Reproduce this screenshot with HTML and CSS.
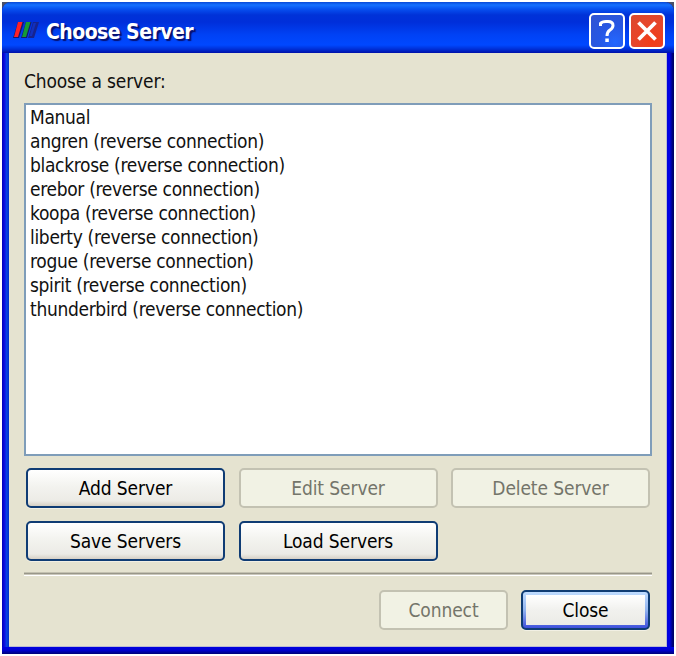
FILE: index.html
```
<!DOCTYPE html>
<html lang="en">
<head>
<meta charset="utf-8">
<title>Choose Server</title>
<link rel="stylesheet" href="styles.css">
</head>
<body>
<main class="window">
  <header class="titlebar">
    <svg class="logo" viewBox="0 0 26 18" width="26" height="18">
      <path d="M5 1H11L6 17H0Z" fill="#17176b"/>
      <path d="M5 1H9.5L5 16H1Z" fill="#ff2028"/>
      <path d="M13 1H18.5L14 17H8Z" fill="#17176b"/>
      <path d="M13 1H17.5L13 16H9Z" fill="#159b35"/>
      <path d="M20 1H26L21 17H15Z" fill="#17238e"/>
      <path d="M20.5 2H23L19 15H16.5Z" fill="#1230bd"/>
    </svg>
    <h1 class="title">Choose Server</h1>
    <button class="caption help" aria-label="Help">
      <svg viewBox="0 0 32 32" width="32" height="32"><path d="M9.5 11V8.5Q11 6.5 15 6.5H17Q22 6.5 22 10.5Q22 13 19 15Q16 17 16 21" fill="none" stroke="#fff" stroke-width="3"/><path d="M14.3 23.5H17.8V27H14.3Z" fill="#fff"/></svg>
    </button>
    <button class="caption exit" aria-label="Close window">
      <svg viewBox="0 0 32 32" width="32" height="32"><path d="M7.5 7.5L24.5 24.5M24.5 7.5L7.5 24.5" fill="none" stroke="#fff" stroke-width="3.8"/></svg>
    </button>
  </header>
  <section class="client">
    <p class="label">Choose a server:</p>
    <ul class="list">
      <li>Manual</li>
      <li>angren (reverse connection)</li>
      <li>blackrose (reverse connection)</li>
      <li>erebor (reverse connection)</li>
      <li>koopa (reverse connection)</li>
      <li>liberty (reverse connection)</li>
      <li>rogue (reverse connection)</li>
      <li>spirit (reverse connection)</li>
      <li>thunderbird (reverse connection)</li>
    </ul>
    <div class="actions">
      <button class="button">Add Server</button>
      <button class="button" disabled>Edit Server</button>
      <button class="button" disabled>Delete Server</button>
      <button class="button">Save Servers</button>
      <button class="button">Load Servers</button>
    </div>
    <hr class="rule">
    <div class="footer">
      <button class="button" disabled>Connect</button>
      <button class="button default">Close</button>
    </div>
  </section>
</main>
</body>
</html>
```
FILE: styles.css
```
* { box-sizing: border-box; }
body {
  margin: 0;
  padding: 2px;
  background: #fff;
  font-family: "DejaVu Sans Condensed", "DejaVu Sans", sans-serif;
  font-size: 19px;
  color: #111;
}
.window {
  width: 672px;
  height: 652px;
  padding: 0 7px 7px;
  display: flex;
  flex-direction: column;
  background:
    linear-gradient(#0000e0, #0000d0 45%, #000078) bottom / 100% 7px no-repeat,
    linear-gradient(90deg, #0000b8, #0d0de0 35%, #0640e4 65%, #0030c8) left / 7px 100% no-repeat,
    linear-gradient(90deg, #0000d8, #0000e8 35%, #000078 80%, #000060) right / 7px 100% no-repeat,
    #4a5068;
}
.titlebar {
  height: 51px;
  margin: 0 -7px;
  padding: 0 9px 0 11px;
  display: flex;
  align-items: center;
  border-radius: 9px 9px 0 0;
  box-shadow: 0 0 0 9px #4a5068;
  clip-path: inset(0);
  background: linear-gradient(#0848d8 0, #1570ff 3px, #0750f0 7px, #0032d8 13px, #002fda 20px, #0042f5 33px, #0048ff 43px, #0030d8 47px, #0010a8 51px);
}
.logo { margin-top: 4px; }
.title {
  margin: 9px auto 0 7px;
  font-size: 21px;
  line-height: 28px;
  letter-spacing: -0.55px;
  font-weight: bold;
  color: #fff;
  text-shadow: 2px 2px 1px #061070;
}
.caption {
  width: 36px;
  height: 36px;
  margin-top: 6px;
  padding: 0;
  border: 2px solid #fff;
  border-radius: 5px;
}
.caption svg { display: block; }
.help { background: radial-gradient(circle at 75% 85%, #2467ff, #2757e4 45%, #3153d0); }
.exit { margin-left: 4px; background: radial-gradient(circle at 65% 80%, #f23c17, #e6462b 55%, #d9492f); }
.client {
  flex: 1;
  padding: 17px 15px 0;
  background: #e5e3d0;
  border-right: 1px solid #b9bad2;
  border-bottom: 1px solid #b9bad2;
}
.label { margin: 0; height: 33px; line-height: 22px; letter-spacing: -0.15px; }
.list {
  width: 628px;
  height: 353px;
  margin: 0;
  padding: 0 4px;
  list-style: none;
  line-height: 24px;
  letter-spacing: -0.32px;
  background: #fff;
  border: 2px solid #7f9db9;
}
.actions {
  padding: 12px 2px 0;
  display: grid;
  grid-template-columns: repeat(3, 199px);
  gap: 13px 13.5px;
}
.button {
  height: 40px;
  padding: 0;
  font: inherit;
  letter-spacing: -0.1px;
  color: #000;
  background: linear-gradient(#fff, #f3f3ef 45%, #ecebe6 86%, #d6d0c5);
  border: 2px solid #0f3c74;
  border-radius: 5px;
  box-shadow: 0 1px #f2f0e4;
}
.button:disabled {
  color: #74756a;
  background: #f1f2e4;
  border-color: #c3c2b2;
  box-shadow: none;
}
.rule {
  height: 4px;
  margin: 11px 0 0;
  width: 628px;
  border: 0;
  background: linear-gradient(#c3c1b0 0 1px, #99978a 1px 2px, #c9c7ba 2px 3px, #fff 3px);
}
.footer {
  width: 626px;
  margin-top: 14px;
  display: flex;
  justify-content: flex-end;
  gap: 13px;
}
.footer .button { width: 129px; }
.footer .default {
  background:
    linear-gradient(#fff, #f1f1ee 50%, #ebebe6) center / 119px 30px no-repeat,
    linear-gradient(#bfdcff, #91b4ef 50%, #3f50dc);
}
```
